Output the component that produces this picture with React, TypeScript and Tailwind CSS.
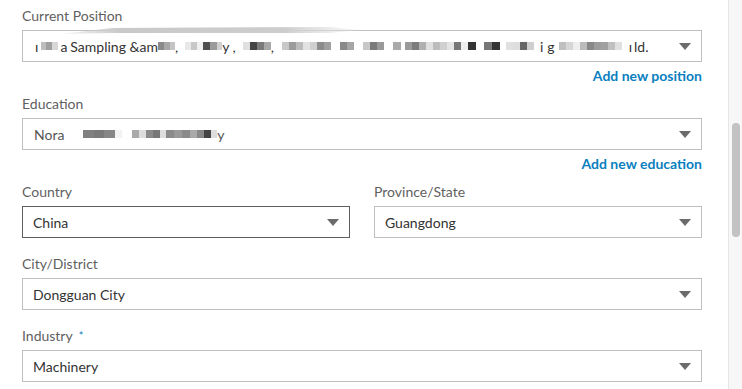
import React from "react";

type Seg = string | [number, string];

const Arrow = () => (
  <svg width="12" height="7" viewBox="0 0 12 7" className="shrink-0">
    <path d="M0 0h12L6 7z" fill="#6b6b6b" />
  </svg>
);

const Segments = ({ segs }: { segs: Seg[] }) => (
  <div className="flex items-center whitespace-pre">
    {segs.map((s, i) =>
      typeof s === "string" ? (
        <span key={i}>{s}</span>
      ) : (
        <span
          key={i}
          className="inline-block h-[8px] shrink-0"
          style={{ width: s[0], background: s[1] }}
        />
      )
    )}
  </div>
);

const Select = ({
  children,
  focused,
}: {
  children: React.ReactNode;
  focused?: boolean;
}) => (
  <div
    className={`h-[32px] border ${
      focused ? "border-[#5e5e5e]" : "border-[#bfbfbf]"
    } bg-white flex items-center justify-between pl-[10px] pr-[10px] text-[14px] text-[#333333] overflow-hidden`}
  >
    <div className="flex-1 min-w-0 overflow-hidden">{children}</div>
    <Arrow />
  </div>
);

const Label = ({ children }: { children: React.ReactNode }) => (
  <div className="text-[14px] leading-[20px] text-[#5f5f5f] mb-1">{children}</div>
);

const LinkRow = ({ children }: { children: React.ReactNode }) => (
  <div className="mt-1 h-5 leading-5 flex justify-end">
    <span className="text-[14px] font-bold text-[#0a7fc0]">{children}</span>
  </div>
);

const T = "transparent";

const pos: Seg[] = [
  [2, T], "ı", [3, T],
  [5, "#bdbdbd"], [6, "#a0a0a0"], [6, "#d8d8d8"],
  [2, T], "a", [3, T],
  "Sampling &am",
  [6, "#8a8a8a"], [6, "#a8a8a8"], [5, "#c4c4c4"], ",",
  [7, T], [6, "#e8e8e8"], [6, "#c8c8c8"], [6, "#f0f0f0"], [7, "#4f4f4f"], [7, "#9a9a9a"], [5, "#d0d0d0"], "y ,",
  [7, T], [7, "#e0e0e0"], [7, "#444444"], [7, "#7a7a7a"], [7, "#a8a8a8"], ",",
  [8, T], [7, "#c8c8c8"], [7, "#9c9c9c"], [7, "#bcbcbc"], [7, "#e2e2e2"], [7, "#cfcfcf"], [7, "#8c8c8c"], [7, "#a0a0a0"],
  [9, T], [7, "#8a8a8a"], [7, "#a6a6a6"], [9, T],
  [7, "#c8c8c8"], [7, "#7a7a7a"], [7, "#9a9a9a"], [9, T],
  [8, "#aaaaaa"], [4, T],
  [7, "#9a9a9a"], [7, "#7c7c7c"], [7, "#b0b0b0"], [7, "#e0e0e0"], [7, "#bcbcbc"], [7, "#d0d0d0"], [7, "#e4e4e4"], [7, "#777777"], [7, "#eeeeee"], [8, "#333333"], [8, T], [8, "#777777"], [8, "#333333"],
  [6, T], [7, "#e0e0e0"], [7, "#dddddd"], [7, "#676767"], [7, "#cfcfcf"], [6, T], "i", [4, T], "g",
  [4, T], [7, "#c0c0c0"], [7, "#d6d6d6"], [7, "#eeeeee"], [7, "#bbbbbb"], [7, "#888888"], [7, "#9c9c9c"],
  [7, "#a0a0a0"], [7, "#c0c0c0"], [7, "#e0e0e0"], [7, T], "ı", [2, T], "ld.",
];

const edu: Seg[] = [
  [1, T], "Nora", [19, T],
  [11, "#808080"], [10, "#7a7a7a"], [11, "#868686"], [7, "#f2f2f2"], [10, T],
  [7, "#aaaaaa"], [7, "#dddddd"], [7, "#8a8a8a"], [7, "#777777"], [6, "#dedede"], [8, "#8a8a8a"], [8, "#999999"], [8, "#8a8a8a"], [7, "#aaaaaa"], [7, "#888888"], [7, "#444444"], [6, "#dddddd"], "y",
];

export default function App() {
  return (
    <div
      className="w-[742px] h-[389px] overflow-hidden bg-white flex"
      style={{ fontFamily: "Lato, 'Open Sans', sans-serif" }}
    >
      <div className="w-[728px] pl-[22px] pr-[26px] pt-[6px] relative">
        <svg
          className="absolute left-[40px] top-[25px]"
          width="320"
          height="12"
          viewBox="0 0 320 12"
        >
          <defs>
            <linearGradient id="sm" x1="0" x2="1" y1="0" y2="0">
              <stop offset="0" stopColor="#d4d4d4" stopOpacity="0.2" />
              <stop offset="0.2" stopColor="#c9c9c9" />
              <stop offset="0.75" stopColor="#cdcdcd" />
              <stop offset="1" stopColor="#e8e8e8" stopOpacity="0.3" />
            </linearGradient>
          </defs>
          <path d="M20 9 L72 3 L290 2 L320 5 L290 8 L72 8 Z" fill="url(#sm)" />
        </svg>

        <Label>Current Position</Label>
        <Select>
          <Segments segs={pos} />
        </Select>
        <LinkRow>Add new position</LinkRow>

        <div className="mt-2">
          <Label>Education</Label>
          <Select>
            <div className="text-[#555]">
              <Segments segs={edu} />
            </div>
          </Select>
        </div>
        <LinkRow>Add new education</LinkRow>

        <div className="mt-2 grid grid-cols-2 gap-x-6">
          <div>
            <Label>Country</Label>
            <Select focused>China</Select>
          </div>
          <div>
            <Label>Province/State</Label>
            <Select>Guangdong</Select>
          </div>
        </div>

        <div className="mt-4">
          <Label>City/District</Label>
          <Select>Dongguan City</Select>
        </div>

        <div className="mt-4">
          <Label>
            Industry<span className="ml-[6px] text-[11px] align-top text-[#0a7fc0]">*</span>
          </Label>
          <Select>Machinery</Select>
        </div>
      </div>

      <div className="w-[14px] h-full bg-[#f7f7f7] border-l border-[#e6e6e6] pt-[123px] flex justify-center">
        <div className="w-[8px] h-[114px] rounded-full bg-[#c2c2c2]" />
      </div>
    </div>
  );
}
